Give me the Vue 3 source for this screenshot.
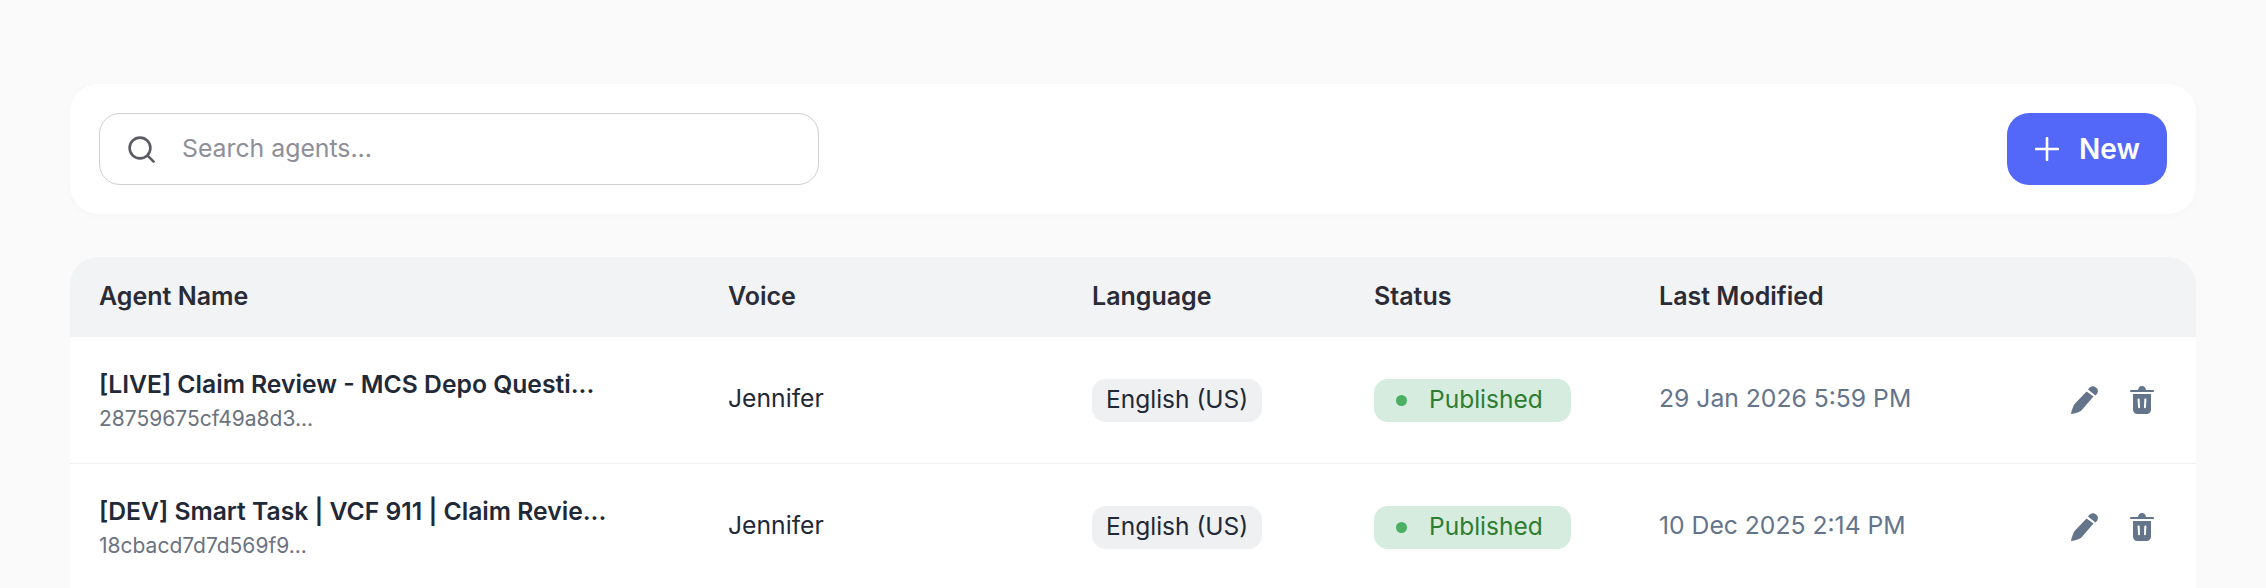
<script setup>
import { ref } from 'vue'

const search = ref('')

const agents = [
  {
    name: '[LIVE] Claim Review - MCS Depo Questi...',
    id: '28759675cf49a8d3...',
    voice: 'Jennifer',
    language: 'English (US)',
    status: 'Published',
    modified: '29 Jan 2026 5:59 PM'
  },
  {
    name: '[DEV] Smart Task | VCF 911 | Claim Revie...',
    id: '18cbacd7d7d569f9...',
    voice: 'Jennifer',
    language: 'English (US)',
    status: 'Published',
    modified: '10 Dec 2025 2:14 PM'
  }
]
</script>

<template>
  <div class="page">
    <div class="toolbar">
      <label class="search">
        <svg class="search-icon" viewBox="0 0 27 27" fill="none" stroke="#5b5b66" stroke-width="2.6" stroke-linecap="round">
          <circle cx="12" cy="12" r="10.4" />
          <path d="M19.6 19.6 25.6 25.6" />
        </svg>
        <input v-model="search" type="text" placeholder="Search agents..." />
      </label>
      <button class="new-btn">
        <svg class="plus" viewBox="0 0 24 24" fill="none" stroke="#fff" stroke-width="2.6" stroke-linecap="round">
          <path d="M12 1v22M1 12h22" />
        </svg>
        New
      </button>
    </div>

    <div class="table">
      <div class="row head">
        <div>Agent Name</div>
        <div>Voice</div>
        <div>Language</div>
        <div>Status</div>
        <div>Last Modified</div>
        <div></div>
      </div>
      <div v-for="agent in agents" :key="agent.id" class="row body">
        <div>
          <div class="name">{{ agent.name }}</div>
          <div class="agent-id">{{ agent.id }}</div>
        </div>
        <div class="voice">{{ agent.voice }}</div>
        <div><span class="pill lang">{{ agent.language }}</span></div>
        <div>
          <span class="pill status"><i class="dot"></i>{{ agent.status }}</span>
        </div>
        <div class="date">{{ agent.modified }}</div>
        <div class="actions">
          <svg class="edit" viewBox="0 0 27 28" fill="#64748b">
            <path d="M15.6 5.400 22.500 10.600 10.400 24.600C8.200 26.400 3.600 27.600.8 28 .2 28 0 27.500.1 27 1 23.600 2.400 19.600 4 17.600Z" />
            <path d="M17 3.600C18.200 1.200 20.600-.2 23.200.4 26.200 1.200 27.600 4.200 26.600 6.800 26.200 7.800 25.400 8.800 24.400 9.400Z" />
          </svg>
          <svg class="trash" viewBox="0 0 24 28" fill="#64748b">
            <path fill-rule="evenodd" d="M8 4C8.400 1.600 9.800 0 12 0s3.600 1.600 4 4h6.800c.8 0 1.200.4 1.200 1s-.4 1-1.200 1H1.200C.4 6 0 5.600 0 5s.4-1 1.200-1ZM3 8h18v15.500C21 26.200 19.200 28 16.500 28h-9C4.800 28 3 26.200 3 23.500ZM8.600 12.500c-.7 0-1.100.5-1 1.200l.5 7.500c.1.600.5 1 1 1s.9-.4.9-1l-.3-7.600c0-.6-.5-1.100-1.100-1.100ZM15.400 12.500c-.6 0-1.100.5-1.100 1.100l-.3 7.600c0 .6.400 1 .9 1s.9-.4 1-1l.5-7.500c.1-.7-.3-1.200-1-1.200Z" />
          </svg>
        </div>
      </div>
    </div>
  </div>
</template>

<style scoped>
.page {
  padding: 84px 70px 0;
  font-family: Inter, "Noto Sans", sans-serif;
  color: #1f2937;
}

.toolbar {
  display: flex;
  justify-content: space-between;
  align-items: center;
  height: 130px;
  padding: 0 29px;
  background: #fff;
  border-radius: 28px;
  box-shadow: 0 2px 8px rgba(0, 0, 0, 0.02);
}

.search {
  display: flex;
  align-items: center;
  gap: 27px;
  width: 720px;
  height: 72px;
  padding: 0 28px;
  border: 1px solid #cfcfd4;
  border-radius: 21px;
  box-sizing: border-box;
}

.search-icon {
  flex: none;
  width: 27px;
  height: 27px;
}

.search input {
  flex: 1;
  min-width: 0;
  height: 30px;
  margin-bottom: 3px;
  border: none;
  outline: none;
  padding: 0;
  background: transparent;
  font: 400 24.8px Inter, "Noto Sans", sans-serif;
  color: #1f2937;
}

.search input::placeholder {
  color: #8e8e9a;
  opacity: 1;
}

.new-btn {
  display: flex;
  align-items: center;
  gap: 20px;
  width: 160px;
  height: 72px;
  padding: 0 0 0 28px;
  border: none;
  border-radius: 22px;
  background: #5367f8;
  color: #fff;
  font: 600 28px Inter, "Noto Sans", sans-serif;
  box-sizing: border-box;
}

.plus {
  flex: none;
  width: 24px;
  height: 24px;
}

.table {
  margin-top: 43px;
  background: #fff;
  border-radius: 28px 28px 0 0;
  overflow: hidden;
}

.row {
  display: grid;
  grid-template-columns: 629px 364px 282px 285px 1fr 125px;
  align-items: center;
  padding-left: 29px;
}

.head {
  height: 80px;
  padding-bottom: 2px;
  box-sizing: border-box;
  background: #f2f3f5;
  font-size: 25px;
  font-weight: 600;
  color: #2a2b36;
}

.body {
  height: 127px;
  border-bottom: 1px solid #eeeff1;
  box-sizing: border-box;
  font-size: 24.7px;
}

.name {
  font-weight: 600;
  font-size: 24.7px;
  line-height: 32px;
}

.agent-id {
  margin-top: 6px;
  margin-bottom: 1px;
  font-size: 21px;
  line-height: 26px;
  color: #6b7280;
}

.voice,
.date {
  padding-bottom: 4px;
}

.pill {
  display: inline-flex;
  align-items: center;
  height: 43px;
  padding-bottom: 2px;
  border-radius: 14px;
  box-sizing: border-box;
  font-size: 24.5px;
}

.lang {
  padding-left: 14px;
  padding-right: 14px;
  background: #eff0f2;
}

.status {
  padding-left: 22px;
  padding-right: 28px;
  background: #d5ecdf;
  color: #2e7d32;
}

.dot {
  width: 11px;
  height: 11px;
  margin-top: 2px;
  margin-right: 22px;
  border-radius: 50%;
  background: #4caf64;
}

.date {
  color: #64748b;
}

.actions {
  display: flex;
  align-items: center;
  gap: 32px;
}

.edit {
  width: 27px;
  height: 28px;
}

.trash {
  width: 24px;
  height: 28px;
}
</style>

<style>
html,
body {
  background: #fafafa;
  overflow: hidden;
}
</style>
